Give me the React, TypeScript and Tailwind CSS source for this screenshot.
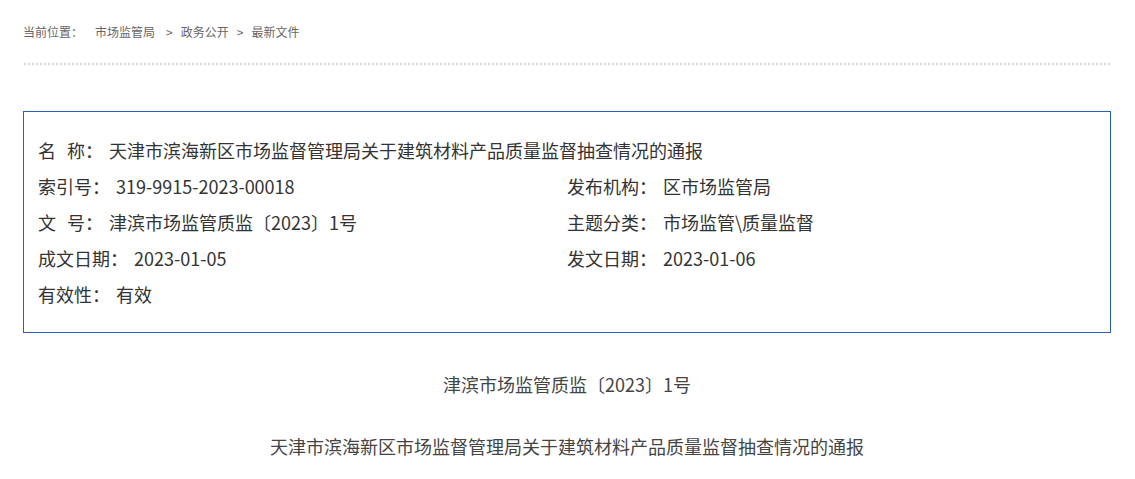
const font = { fontFamily: '"Microsoft YaHei", "Noto Sans CJK SC", "Noto Sans", sans-serif' };

const meta = [
    [{ k: '名', k2: '称：', v: '天津市滨海新区市场监督管理局关于建筑材料产品质量监督抽查情况的通报', full: true }],
    [{ k: '索引号：', v: '319-9915-2023-00018' }, { k: '发布机构：', v: '区市场监管局' }],
    [{ k: '文', k2: '号：', v: '津滨市场监管质监〔2023〕1号' }, { k: '主题分类：', v: '市场监管\\质量监督' }],
    [{ k: '成文日期：', v: '2023-01-05' }, { k: '发文日期：', v: '2023-01-06' }],
    [{ k: '有效性：', v: '有效' }],
];

const Crumb = () => (
    <div className="flex items-center pt-[22px] h-[42px] text-[12px] leading-[20px] text-[#666]">
        <span>当前位置：</span>
        <span className="ml-[12px]">市场监管局</span>
        <span className="ml-[11px] mr-[8px]">&gt;</span>
        <span>政务公开</span>
        <span className="ml-[8px] mr-[8px]">&gt;</span>
        <span>最新文件</span>
    </div>
);

export default function App() {
    return (
        <div className="w-[1135px] bg-white text-[#333]" style={font}>
            <div className="ml-[23px] w-[1088px]">
                <Crumb />
                <div className="mt-[21px] ml-px mr-px h-[2px] bg-[repeating-linear-gradient(90deg,#d4d4d4_0,#d4d4d4_2px,transparent_2px,transparent_4px)]" />
                <div className="mt-[46px] border border-[#2b5cbf] px-[14px] py-[20px] text-[18px] leading-[36px]">
                    {meta.map((row, i) => (
                        <div key={i} className="grid grid-cols-2">
                            {row.map(c => (
                                <div key={c.k} className={'whitespace-nowrap ' + (c.full ? 'col-span-2' : '')}>
                                    <span>{c.k}</span>
                                    {c.k2 && <span className="ml-[11px]">{c.k2}</span>}
                                    <span className="ml-[6px]">{c.v}</span>
                                </div>
                            ))}
                        </div>
                    ))}
                </div>
                <p className="mt-[33px] text-center text-[18px] leading-[36px] text-[#444]">津滨市场监管质监〔2023〕1号</p>
                <p className="mt-[26px] text-center text-[18px] leading-[36px] text-[#444]">天津市滨海新区市场监督管理局关于建筑材料产品质量监督抽查情况的通报</p>
            </div>
        </div>
    );
}
